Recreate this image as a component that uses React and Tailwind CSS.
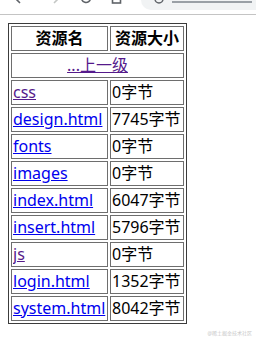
import React from 'react';

const rows = [
    { name: 'css', size: '0字节', visited: true },
    { name: 'design.html', size: '7745字节' },
    { name: 'fonts', size: '0字节' },
    { name: 'images', size: '0字节' },
    { name: 'index.html', size: '6047字节' },
    { name: 'insert.html', size: '5796字节' },
    { name: 'js', size: '0字节', visited: true },
    { name: 'login.html', size: '1352字节' },
    { name: 'system.html', size: '8042字节' },
];

function BrowserBar() {
    return (
        <div className="h-[15px] border-b border-[#c4c4c4] overflow-hidden flex items-start bg-white">
            {/* nav icons, only their lower edges are visible */}
            <svg width="14" height="14" viewBox="0 0 14 14" className="ml-[13px] -mt-[9px]" fill="none" stroke="#5f6368" strokeWidth="1.6">
                <path d="M12 7H3M7 2L2 7l5 5" />
            </svg>
            <svg width="14" height="14" viewBox="0 0 14 14" className="ml-[20px] -mt-[9px]" fill="none" stroke="#c4c7c5" strokeWidth="1.6">
                <path d="M2 7h9M7 2l5 5-5 5" />
            </svg>
            <svg width="14" height="14" viewBox="0 0 14 14" className="ml-[18px] -mt-[9px]" fill="none" stroke="#5f6368" strokeWidth="1.6">
                <path d="M11.5 7a4.5 4.5 0 1 1-1.3-3.2" />
            </svg>
            <svg width="14" height="14" viewBox="0 0 14 14" className="ml-[17px] -mt-[9px]" fill="none" stroke="#5f6368" strokeWidth="1.6">
                <rect x="2.5" y="1" width="8" height="11" />
            </svg>
            {/* address bar */}
            <div className="ml-auto w-[115px] h-[10px] bg-[#f1f3f4] rounded-bl-[10px] flex items-start">
                <svg width="10" height="10" viewBox="0 0 10 10" className="ml-[13px] -mt-[6px]" fill="none" stroke="#5f6368" strokeWidth="1.4">
                    <circle cx="5" cy="5" r="4" />
                </svg>
                <div className="ml-[8px] mt-[1px] w-[80px] h-[2px] bg-[#9aa0a6]" />
            </div>
        </div>
    );
}

export default function App() {
    const cell = 'border border-[#6e6e6e] p-px h-[25px] align-middle';
    const inner = 'block h-[21px] leading-[21px] overflow-hidden whitespace-nowrap';

    return (
        <div className="relative w-[256px] h-[338px] bg-white text-black text-[16px] font-['Noto_Sans','Noto_Sans_CJK_SC',sans-serif] overflow-hidden">
            <BrowserBar />

            <div className="px-[8px] pt-[8px]">
                <table className="border-separate border-spacing-[2px] border border-[#3c3c3c]">
                    <thead>
                        <tr>
                            <th className={`${cell} w-[97px] font-bold text-center`}><span className={inner}>资源名</span></th>
                            <th className={`${cell} w-[74px] font-bold text-center`}><span className={inner}>资源大小</span></th>
                        </tr>
                    </thead>
                    <tbody>
                        <tr>
                            <td colSpan={2} className={`${cell} text-center`}>
                                <span className={inner}>
                                    <a href="#" className="underline text-[#551a8b]">...上一级</a>
                                </span>
                            </td>
                        </tr>
                        {rows.map(row => (
                            <tr key={row.name}>
                                <td className={cell}>
                                    <span className={inner}>
                                        <a href="#" className={`underline ${row.visited ? 'text-[#551a8b]' : 'text-[#0000ee]'}`}>
                                            {row.name}
                                        </a>
                                    </span>
                                </td>
                                <td className={cell}><span className={inner}>{row.size}</span></td>
                            </tr>
                        ))}
                    </tbody>
                </table>
            </div>

            {/* watermark */}
            <span className="absolute right-[4px] bottom-[2px] text-[5px] leading-[6px] text-[#c8c8c8]">@稀土掘金技术社区</span>
        </div>
    );
}
